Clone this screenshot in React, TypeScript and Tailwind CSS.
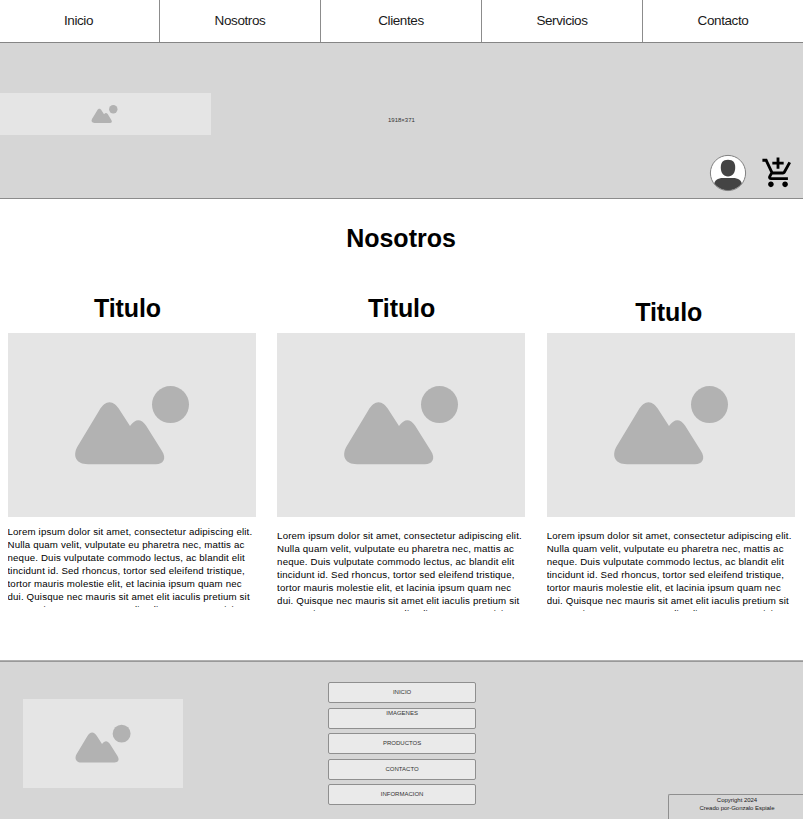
const navItems = [
  { label: "Inicio", cell: "w-40 border-r pr-0.5" },
  { label: "Nosotros", cell: "w-[161px] border-r" },
  { label: "Clientes", cell: "w-[161px] border-r" },
  { label: "Servicios", cell: "w-[161px] border-r" },
  { label: "Contacto", cell: "w-40" },
];

const cards = [
  { title: "pr-2", text: "mt-2" },
  { title: "pl-px", text: "mt-3" },
  { title: "pr-1 pt-1", text: "mt-3" },
];

const links = [
  { label: "INICIO", pad: "pt-[5px]" },
  { label: "IMAGENES", pad: "pt-0" },
  { label: "PRODUCTOS", pad: "pt-[5px]" },
  { label: "CONTACTO", pad: "pt-[5px]" },
  { label: "INFORMACION", pad: "pt-[5px]" },
];

const lorem =
  "Lorem ipsum dolor sit amet, consectetur adipiscing elit. Nulla quam velit, vulputate eu pharetra nec, mattis ac neque. Duis vulputate commodo lectus, ac blandit elit tincidunt id. Sed rhoncus, tortor sed eleifend tristique, tortor mauris molestie elit, et lacinia ipsum quam nec dui. Quisque nec mauris sit amet elit iaculis pretium sit amet enim purus. Aenean velit, aliquet egestas nisi";

function Placeholder({ className }: { className: string }) {
  return (
    <div className={`shrink-0 bg-[#e5e5e5] ${className}`}>
      <svg viewBox="0 0 248 184" className="block h-full w-full" fill="#b2b2b2">
        <circle cx="162.500" cy="71.600" r="18.500" />
        <path d="M80 131.200C68 131.200 64.500 123 69.200 114L91.200 77.500C97.500 66.500 105.500 66.500 112 77.500L122 93C127.500 85.500 133 85.500 138 92.500L154 118C159 126 155 131.200 148 131.200Z" />
      </svg>
    </div>
  );
}

function Avatar() {
  return (
    <svg width="38" height="38" viewBox="0 0 38 38" className="mt-px">
      <defs>
        <clipPath id="face">
          <circle cx="19" cy="19" r="17.400" />
        </clipPath>
      </defs>
      <circle cx="19" cy="19" r="17.600" fill="#fff" />
      <g fill="#444" clipPath="url(#face)">
        <path d="M19 5.700C24.300 5.700 26.200 8.500 26.200 13.500C26.200 19 23.500 22.500 19 22.500S11.800 19 11.800 13.500C11.800 8.500 13.700 5.700 19 5.700Z" />
        <path d="M5 38V31C5 26.500 9 24 14 24H24C29 24 33 26.500 33 31V38Z" />
      </g>
      <circle cx="19" cy="19" r="17.600" fill="none" stroke="#808080" />
    </svg>
  );
}

function CartIcon() {
  return (
    <svg width="34" height="34" viewBox="0 0 24 24" fill="#000">
      <path d="M11 9h2V6h3V4h-3V1h-2v3H8v2h3v3zm-4 9c-1.100 0-1.990.9-1.990 2S5.900 22 7 22s2-.9 2-2-.9-2-2-2zm10 0c-1.100 0-1.990.9-1.990 2s.89 2 1.990 2 2-.9 2-2-.9-2-2-2zm-9.830-3.250l.03-.12.9-1.630h7.450c.75 0 1.410-.41 1.750-1.030l3.860-7.010L19.420 4h-.01l-1.100 2-2.760 5H8.530l-.13-.27L6.160 6l-.95-2-.94-2H1v2h2l3.600 7.590-1.350 2.450c-.16.28-.25.61-.25.96 0 1.100.9 2 2 2h12v-2H7.420c-.13 0-.25-.11-.25-.25z" />
    </svg>
  );
}

export default function App() {
  return (
    <div className="flex h-[819px] w-[803px] flex-col overflow-hidden bg-white font-['Liberation_Sans',Arial,sans-serif] text-black">
      <nav className="flex h-[43px] shrink-0 border-b border-[#858585]">
        {navItems.map((item) => (
          <a key={item.label} className={`flex justify-center border-[#8c8c8c] pt-[13px] text-[13.5px] leading-4 tracking-[-0.4px] text-[#1a1a1a] ${item.cell}`}>
            {item.label}
          </a>
        ))}
      </nav>

      <header className="flex h-[156px] shrink-0 border-b border-[#8c8c8c] bg-[#d6d6d6]">
        <Placeholder className="-ml-[2.5px] mt-[49.6px] h-[42px] w-[213px]" />
        <p className="ml-[177.5px] mt-[73px] text-[6px] leading-2 text-[#333]">1918×371</p>
        <div className="ml-auto mt-[110px] flex gap-[14.5px] pr-2">
          <Avatar />
          <div className="mt-[2.5px]">
            <CartIcon />
          </div>
        </div>
      </header>

      <main className="h-[461px] shrink-0">
        <h1 className="pr-px pt-6 text-center text-[25px] font-bold leading-[30px]">Nosotros</h1>
        <div className="mt-10 flex gap-[21.600px] pl-[7.500px]">
          {cards.map((card, i) => (
            <article key={i} className="w-[248px]">
              <h2 className={`h-[40.4px] text-center text-[25px] font-bold leading-[30px] tracking-[-0.1px] ${card.title}`}>Titulo</h2>
              <Placeholder className="h-[184px] w-[248px]" />
              <p className={`h-[81.5px] w-[250px] overflow-hidden text-[9.7px] leading-[13px] tracking-[0.16px] ${card.text}`}>{lorem}</p>
            </article>
          ))}
        </div>
      </main>

      <footer className="flex h-[159px] shrink-0 border-t border-[#b0b0b0] bg-[#d6d6d6] shadow-[inset_0_1px_0_#999]">
        <Placeholder className="ml-[22.600px] mt-[38px] h-[89px] w-40" />
        <div className="ml-[145.500px] mt-[21px] flex flex-col gap-[4.6px]">
          {links.map((link) => (
            <a key={link.label} className={`h-[21px] w-[148px] rounded-xs border border-[#8f8f8f] bg-[#eaeaea] text-center text-[6px] leading-2 text-[#333] ${link.pad}`}>
              {link.label}
            </a>
          ))}
        </div>
        <div className="ml-auto h-[25px] w-[135px] self-end rounded-tl-xs border-l border-t border-[#8f8f8f] pl-0.5 pt-px text-center text-[6px] leading-2 tracking-[-0.03px] text-[#1a1a1a]">
          <p>Copyright 2024</p>
          <p>Creado por-Gonzalo Espiale</p>
        </div>
      </footer>
    </div>
  );
}
